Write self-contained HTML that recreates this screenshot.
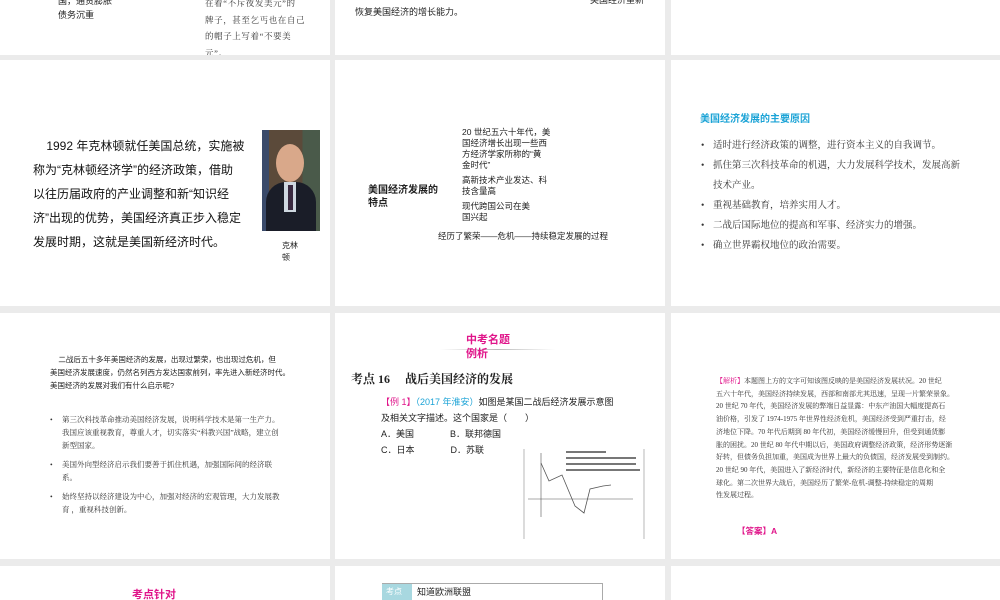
<!DOCTYPE html>
<html><head><meta charset="utf-8">
<style>
*{margin:0;padding:0;box-sizing:border-box}
body{width:1000px;height:600px;background:#ebebeb;position:relative;overflow:hidden;font-family:"Liberation Sans","Noto Sans CJK SC",sans-serif;color:#222}
.s{position:absolute;background:#fff;overflow:hidden}
.a{position:absolute;white-space:nowrap}
.serif{font-family:"Liberation Serif","Noto Serif CJK SC",serif}
ul{list-style:none}
li{position:relative;padding-left:12px}
li:before{content:"•";position:absolute;left:0}
</style></head><body>
<!-- row 1 -->
<div class="s" style="left:0;top:0;width:330px;height:55px">
<div class="a" style="left:58px;top:-6px;font-size:9px;line-height:14px">国，通货膨胀<br>债务沉重</div>
<div class="a serif" style="left:205px;top:-5px;font-size:8.5px;line-height:16.5px;color:#333;letter-spacing:0.6px">在着“不斥夜发美元”的<br>牌子，甚至乞丐也在自己<br>的帽子上写着“不要美<br>元”。</div>
</div>
<div class="s" style="left:335px;top:0;width:330px;height:55px">
<div class="a" style="left:20px;top:5px;font-size:9px">恢复美国经济的增长能力。</div>
<div class="a" style="left:255px;top:-7px;font-size:9px">美国经济重新</div>
</div>
<div class="s" style="left:671px;top:0;width:329px;height:55px"></div>
<!-- row 2 -->
<div class="s" style="left:0;top:60px;width:330px;height:246px">
<div class="a" style="left:33px;top:74px;font-size:12px;line-height:24px;color:#111">&nbsp;&nbsp;&nbsp;&nbsp;1992 年克林顿就任美国总统，实施被<br>称为“克林顿经济学”的经济政策，借助<br>以往历届政府的产业调整和新“知识经<br>济”出现的优势，美国经济真正步入稳定<br>发展时期，这就是美国新经济时代。</div>
<div style="position:absolute;left:262px;top:70px;width:58px;height:101px;background:linear-gradient(90deg,#3a4a6a 0 12%,#5b4a3a 12% 70%,#4a5a4a 70%);">
<div style="position:absolute;left:14px;top:14px;width:28px;height:38px;border-radius:50%;background:#d9a88a"></div>
<div style="position:absolute;left:4px;top:52px;width:50px;height:49px;background:#1a1d28;border-radius:20px 20px 0 0"></div>
<div style="position:absolute;left:22px;top:52px;width:12px;height:30px;background:#cfd8e0"></div>
<div style="position:absolute;left:26px;top:55px;width:5px;height:25px;background:#3a2a40"></div>
</div>
<div class="a" style="left:282px;top:180px;font-size:8px;line-height:12px">克林<br>顿</div>
</div>
<div class="s" style="left:335px;top:60px;width:330px;height:246px">
<div class="a" style="left:33px;top:124px;font-size:10px;line-height:13px;font-weight:bold">美国经济发展的<br>特点</div>
<div class="a" style="left:127px;top:67px;font-size:8.5px;line-height:11px">20 世纪五六十年代，美<br>国经济增长出现一些西<br>方经济学家所称的“黄<br>金时代”</div>
<div class="a" style="left:127px;top:115px;font-size:8.5px;line-height:11px">高新技术产业发达、科<br>技含量高</div>
<div class="a" style="left:127px;top:141px;font-size:8.5px;line-height:11px">现代跨国公司在美<br>国兴起</div>
<div class="a" style="left:103px;top:170px;font-size:8.5px">经历了繁荣——危机——持续稳定发展的过程</div>
</div>
<div class="s" style="left:671px;top:60px;width:329px;height:246px">
<div class="a" style="left:29px;top:50px;font-size:10px;font-weight:bold;color:#1ba3d6">美国经济发展的主要原因</div>
<ul class="serif" style="position:absolute;left:30px;top:76px;width:266px;font-size:9.5px;line-height:20px;color:#333">
<li>适时进行经济政策的调整，进行资本主义的自我调节。</li>
<li>抓住第三次科技革命的机遇，大力发展科学技术，发展高新技术产业。</li>
<li>重视基础教育，培养实用人才。</li>
<li>二战后国际地位的提高和军事、经济实力的增强。</li>
<li>确立世界霸权地位的政治需要。</li>
</ul>
</div>
<!-- row 3 -->
<div class="s" style="left:0;top:313px;width:330px;height:246px">
<div class="a" style="left:50px;top:40px;font-size:7.5px;line-height:13px">&nbsp;&nbsp;&nbsp;&nbsp;二战后五十多年美国经济的发展，出现过繁荣，也出现过危机，但<br>美国经济发展速度，仍然名列西方发达国家前列，率先进入新经济时代。<br>美国经济的发展对我们有什么启示呢?</div>
<ul class="serif" style="position:absolute;left:50px;top:100px;width:235px;font-size:7.5px;line-height:13px;color:#333">
<li style="margin-bottom:6px">第三次科技革命推动美国经济发展，说明科学技术是第一生产力。我国应该重视教育，尊重人才，切实落实“科教兴国”战略，建立创新型国家。</li>
<li style="margin-bottom:6px">美国外向型经济启示我们要善于抓住机遇，加强国际间的经济联系。</li>
<li>始终坚持以经济建设为中心，加强对经济的宏观管理，大力发展教育 ，重视科技创新。</li>
</ul>
</div>
<div class="s" style="left:335px;top:313px;width:330px;height:246px">
<div style="position:absolute;left:105px;top:36px;width:115px;height:1px;background:linear-gradient(90deg,transparent,#bbb,transparent)"></div>
<div class="a" style="left:131px;top:20px;font-size:11px;line-height:14px;font-weight:bold;color:#e0158a">中考名题<br>例析</div>
<div class="a serif" style="left:16px;top:57px;font-size:12px;font-weight:bold;color:#222">考点 16　 战后美国经济的发展</div>
<div class="a" style="left:46px;top:81px;font-size:9px;line-height:16px"><span style="color:#e0158a">【例 1】</span><span style="color:#1ba3d6">（2017 年淮安）</span>如图是某国二战后经济发展示意图<br>及相关文字描述。这个国家是（　　）<br>A．美国　　　　B．联邦德国<br>C．日本　　　　D．苏联</div>
<svg style="position:absolute;left:188px;top:136px" width="124" height="90" viewBox="0 0 124 90">
<line x1="1" y1="0" x2="1" y2="90" stroke="#888" stroke-width="0.6"/>
<line x1="121" y1="0" x2="121" y2="90" stroke="#888" stroke-width="0.6"/>
<line x1="18" y1="4" x2="18" y2="68" stroke="#555" stroke-width="0.6"/>
<line x1="5" y1="50" x2="110" y2="50" stroke="#555" stroke-width="0.6"/>
<polyline points="18,14 26,32 39,26 52,57 61,64 67,40 80,37 88,36" fill="none" stroke="#555" stroke-width="0.8"/>
<rect x="41" y="0" width="78" height="24" fill="#fff"/>
<g fill="#777"><rect x="43" y="2" width="40" height="2"/><rect x="43" y="8" width="70" height="2"/><rect x="43" y="14" width="70" height="2"/><rect x="43" y="20" width="74" height="2"/></g>
</svg>
</div>
<div class="s" style="left:671px;top:313px;width:329px;height:246px">
<div class="a serif" style="left:45px;top:62px;font-size:7px;line-height:12.7px;color:#333"><span style="color:#e0158a">【解析】</span>本题图上方的文字可知该图反映的是美国经济发展状况。20 世纪<br>五六十年代，美国经济持续发展，西部和南部尤其迅速，呈现一片繁荣景象。<br>20 世纪 70 年代，美国经济发展的弊端日益显露：中东产油国大幅度提高石<br>油价格，引发了 1974-1975 年世界性经济危机，美国经济受到严重打击，经<br>济地位下降。70 年代后期到 80 年代初，美国经济缓慢回升，但受到通货膨<br>胀的困扰。20 世纪 80 年代中期以后，美国政府调整经济政策，经济形势逐渐<br>好转，但债务负担加重，美国成为世界上最大的负债国，经济发展受到制约。<br>20 世纪 90 年代，美国进入了新经济时代，新经济的主要特征是信息化和全<br>球化。第二次世界大战后，美国经历了繁荣-危机-调整-持续稳定的周期<br>性发展过程。</div>
<div class="a" style="left:66px;top:212px;font-size:8.5px;font-weight:bold;color:#e0158a">【答案】A</div>
</div>
<!-- row 4 -->
<div class="s" style="left:0;top:566px;width:330px;height:34px">
<div class="a" style="left:132px;top:20px;font-size:11px;font-weight:bold;color:#e0158a">考点针对</div>
</div>
<div class="s" style="left:335px;top:566px;width:330px;height:34px">
<div style="position:absolute;left:47px;top:17px;width:221px;height:20px;border:1px solid #aaa"></div>
<div class="a" style="left:47px;top:18px;width:30px;height:18px;background:#a8d8e0;color:#fff;font-size:8px;padding:2px 4px">考点</div>
<div class="a" style="left:82px;top:19px;font-size:9px">知道欧洲联盟</div>
</div>
<div class="s" style="left:671px;top:566px;width:329px;height:34px"></div>
</body></html>
